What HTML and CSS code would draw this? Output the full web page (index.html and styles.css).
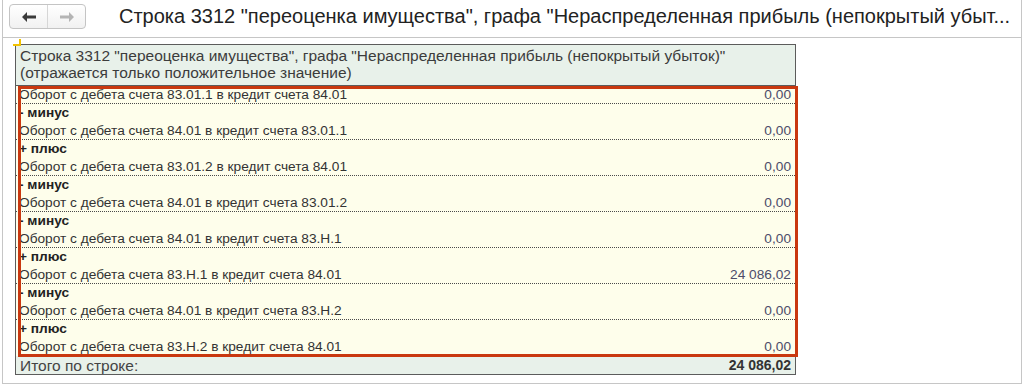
FILE: index.html
```html
<!DOCTYPE html>
<html>
<head>
    <meta charset="utf-8">
    <title>Строка 3312</title>
    <link rel="stylesheet" href="styles.css">
</head>
<body>
<div class="window">
    <div class="topbar">
        <div class="nav">
            <div class="nav-btn">
                <svg width="14" height="10" viewBox="0 0 14 10"><path d="M0 5 L5 0 L5 3.5 L14 3.5 L14 6.5 L5 6.5 L5 10 Z" fill="#3a3a3a"/></svg>
            </div>
            <div class="nav-btn">
                <svg width="14" height="10" viewBox="0 0 14 10"><path d="M14 5 L9 0 L9 3.5 L0 3.5 L0 6.5 L9 6.5 L9 10 Z" fill="#b4b4b4"/></svg>
            </div>
        </div>
        <div class="title">Строка 3312 "переоценка имущества", графа "Нераспределенная прибыль (непокрытый убыт...</div>
    </div>
    <div class="content">
        <div class="corner"></div>
        <div class="grid">
            <div class="head">Строка 3312 "переоценка имущества", графа "Нераспределенная прибыль (непокрытый убыток)"<br>(отражается только положительное значение)</div>
            <div class="rows">
                <div class="row item"><span>Оборот с дебета счета 83.01.1 в кредит счета 84.01</span><span class="num">0,00</span></div>
                <div class="row sign">- минус</div>
                <div class="row item"><span>Оборот с дебета счета 84.01 в кредит счета 83.01.1</span><span class="num">0,00</span></div>
                <div class="row sign">+ плюс</div>
                <div class="row item"><span>Оборот с дебета счета 83.01.2 в кредит счета 84.01</span><span class="num">0,00</span></div>
                <div class="row sign">- минус</div>
                <div class="row item"><span>Оборот с дебета счета 84.01 в кредит счета 83.01.2</span><span class="num">0,00</span></div>
                <div class="row sign">- минус</div>
                <div class="row item"><span>Оборот с дебета счета 84.01 в кредит счета 83.Н.1</span><span class="num">0,00</span></div>
                <div class="row sign">+ плюс</div>
                <div class="row item"><span>Оборот с дебета счета 83.Н.1 в кредит счета 84.01</span><span class="num">24 086,02</span></div>
                <div class="row sign">- минус</div>
                <div class="row item"><span>Оборот с дебета счета 84.01 в кредит счета 83.Н.2</span><span class="num">0,00</span></div>
                <div class="row sign">+ плюс</div>
                <div class="row item last"><span>Оборот с дебета счета 83.Н.2 в кредит счета 84.01</span><span class="num">0,00</span></div>
            </div>
            <div class="total"><span>Итого по строке:</span><span class="total-num">24 086,02</span></div>
        </div>
    </div>
</div>
</body>
</html>
```

FILE: styles.css
```css
body {
    margin: 0;
    font-family: "Liberation Sans", Arial, sans-serif;
    background: #fff;
}

.window {
    margin-left: 2px;
    width: 1020px;
    height: 384px;
    box-sizing: border-box;
    border-left: 1px solid #c6c6c6;
    border-right: 1px solid #c6c6c6;
    border-bottom: 1px solid #c6c6c6;
}

.topbar {
    height: 38px;
    border-bottom: 1px solid #c6c6c6;
    display: flex;
    align-items: flex-start;
    padding: 4px 0 0 6px;
    box-sizing: border-box;
}

.nav {
    display: flex;
    width: 77px;
    height: 25px;
    border: 1px solid #c4c4c4;
    border-radius: 4px;
    box-sizing: border-box;
    background: linear-gradient(#ffffff, #f1f1f1);
}

.nav-btn {
    flex: 1;
    display: flex;
    align-items: center;
    justify-content: center;
}

.nav-btn + .nav-btn {
    border-left: 1px solid #d6d6d6;
}

.title {
    margin-left: 33px;
    font-size: 20px;
    line-height: 24px;
    color: #222;
    white-space: nowrap;
}

.content {
    position: relative;
    padding: 6px 0 0 12px;
}

.corner {
    position: absolute;
    left: 10px;
    top: 1px;
    width: 6px;
    height: 5px;
    border-right: 2px solid #f2c200;
    border-bottom: 2px solid #f2c200;
}

.grid {
    width: 781px;
    box-sizing: border-box;
    border: 1px solid #5c5c5c;
}

.head {
    background: #e8f1ea;
    color: #3c3c3c;
    font-size: 15.5px;
    line-height: 17px;
    padding: 2px 4px 4px 4px;
    border-bottom: 1px solid #5c5c5c;
}

.rows {
    position: relative;
    background: #fefeeb;
}

.rows::after {
    content: "";
    position: absolute;
    left: 2px;
    top: 0;
    right: -3px;
    bottom: -1px;
    border: 3px solid #c9380f;
}

.row {
    display: flex;
    justify-content: space-between;
    height: 18px;
    box-sizing: border-box;
    padding: 1px 4px 0 3px;
    font-size: 13.7px;
    line-height: 16px;
    color: #333;
}

.item {
    border-bottom: 1px dotted #4a4a4a;
}

.item.last {
    border-bottom: none;
}

.sign {
    font-weight: bold;
    color: #222;
}

.num {
    color: #4d4d6a;
}

.total {
    display: flex;
    justify-content: space-between;
    background: #e8f1ea;
    height: 18px;
    box-sizing: border-box;
    padding: 1px 4px 0 4px;
    font-size: 15.5px;
    line-height: 17px;
    color: #444;
}

.total-num {
    font-weight: bold;
    font-size: 14px;
    color: #333;
}
```
